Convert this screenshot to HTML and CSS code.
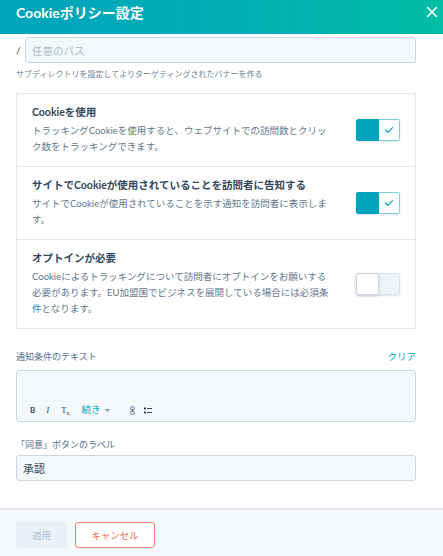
FILE: index.html
```html
<!DOCTYPE html>
<html lang="ja">
<head>
<meta charset="utf-8">
<title>Cookieポリシー設定</title>
<link rel="stylesheet" href="styles.css">
</head>
<body>
<div class="modal">
  <header class="hdr">
    <h1 class="title">Cookieポリシー設定</h1>
    <button class="close" aria-label="閉じる">
      <svg width="12" height="12" viewBox="0 0 12 12"><path d="M1.5 1.5L10.5 10.5M10.5 1.5L1.5 10.5" stroke="#fff" stroke-width="1.6" stroke-linecap="round"/></svg>
    </button>
  </header>
  <main class="main">
    <div class="path-row">
      <span class="slash">/</span>
      <div class="input path-input"><span class="placeholder">任意のパス</span></div>
    </div>
    <p class="help">サブディレクトリを設定してよりターゲティングされたバナーを作る</p>

    <div class="card">
      <div class="opt">
        <div class="opt-text">
          <div class="opt-title">Cookieを使用</div>
          <div class="opt-desc">トラッキングCookieを使用すると、ウェブサイトでの訪問数とクリック数をトラッキングできます。</div>
        </div>
        <span class="toggle on"><span class="half knob"></span><span class="half track"><svg width="10" height="8" viewBox="0 0 10 8"><path d="M1.5 4.2L3.9 6.4L8.5 1.6" fill="none" stroke="#00a4bd" stroke-width="1.2" stroke-linecap="round" stroke-linejoin="round"/></svg></span></span>
      </div>
      <div class="opt">
        <div class="opt-text">
          <div class="opt-title">サイトでCookieが使用されていることを訪問者に告知する</div>
          <div class="opt-desc">サイトでCookieが使用されていることを示す通知を訪問者に表示します。</div>
        </div>
        <span class="toggle on"><span class="half knob"></span><span class="half track"><svg width="10" height="8" viewBox="0 0 10 8"><path d="M1.5 4.2L3.9 6.4L8.5 1.6" fill="none" stroke="#00a4bd" stroke-width="1.2" stroke-linecap="round" stroke-linejoin="round"/></svg></span></span>
      </div>
      <div class="opt">
        <div class="opt-text">
          <div class="opt-title">オプトインが必要</div>
          <div class="opt-desc">Cookieによるトラッキングについて訪問者にオプトインをお願いする必要があります。EU加盟国でビジネスを展開している場合には必須条件となります。</div>
        </div>
        <span class="toggle off"><span class="half knob"></span><span class="half track"></span></span>
      </div>
    </div>

    <div class="label-row">
      <span class="label">通知条件のテキスト</span>
      <a class="link">クリア</a>
    </div>
    <div class="editor">
      <div class="toolbar">
        <span class="tb tb-b">B</span>
        <span class="tb tb-i">I</span>
        <span class="tb tb-tx">T<span class="sub">x</span></span>
        <span class="tb tb-more">続き</span>
        <span class="tb tb-caret"><svg width="5" height="3" viewBox="0 0 5 3"><path d="M0 0H5L2.5 3Z" fill="#7c98b6"/></svg></span>
        <span class="tb tb-link"><svg width="5" height="9" viewBox="0 0 5 9"><rect x="0.6" y="0.6" width="3.8" height="3.4" rx="1.7" fill="none" stroke="#516f90" stroke-width="0.9"/><rect x="0.6" y="5" width="3.8" height="3.4" rx="1.7" fill="none" stroke="#516f90" stroke-width="0.9"/><path d="M2.5 3V6" stroke="#516f90" stroke-width="0.9"/></svg></span>
        <span class="tb tb-list"><svg width="8" height="7" viewBox="0 0 8 7"><rect x="0" y="0.5" width="2" height="2" fill="#33475b"/><rect x="0" y="4.5" width="2" height="2" fill="#33475b"/><path d="M3 1.5H8M3 5.5H8" stroke="#33475b" stroke-width="1.1"/></svg></span>
      </div>
    </div>

    <div class="label label-accept">「同意」ボタンのラベル</div>
    <div class="input value-input">承認</div>
  </main>
  <footer class="ftr">
    <button class="btn btn-apply" disabled>適用</button>
    <button class="btn btn-cancel">キャンセル</button>
  </footer>
</div>
</body>
</html>
```
FILE: styles.css
```css
html, body {
  margin: 0;
  padding: 0;
}
body {
  font-family: Lato, "Noto Sans CJK JP", sans-serif;
  color: #33475b;
  background: #fff;
}
.modal {
  width: 443px;
  height: 556px;
  display: flex;
  flex-direction: column;
  overflow: hidden;
}
.hdr {
  flex: none;
  height: 34px;
  box-sizing: border-box;
  padding: 4px 5px 0 16px;
  display: flex;
  justify-content: space-between;
  align-items: flex-start;
  background: linear-gradient(to right, #00a4bd, #00afb2 56%, #00bda5);
}
.title {
  margin: 0;
  font-size: 14px;
  line-height: 18px;
  font-weight: 700;
  color: #fff;
}
.close {
  border: 0;
  background: none;
  padding: 0;
  margin-top: 2px;
  width: 12px;
  height: 12px;
  display: flex;
}
.main {
  flex: 1;
  padding: 3px 27px 0 16px;
}
.path-row {
  display: flex;
  align-items: center;
}
.slash {
  width: 9px;
  font-size: 10px;
  color: #33475b;
  line-height: 26px;
}
.input {
  height: 26px;
  box-sizing: border-box;
  border: 1px solid #cbd6e2;
  background: #f5f8fa;
  border-radius: 3px;
  padding: 0 6px;
  display: flex;
  align-items: center;
  font-size: 11px;
}
.path-input {
  flex: 1;
}
.placeholder {
  font-size: 10.5px;
  color: #a9b9ca;
}
.help {
  margin: 5px 0 0;
  font-size: 8px;
  line-height: 12px;
  color: #6a7f94;
}
.card {
  margin-top: 13px;
  border: 1px solid #e3e8ee;
}
.opt {
  display: flex;
  align-items: center;
  justify-content: space-between;
  padding: 10px 15px 11px 15px;
}
.opt + .opt {
  border-top: 1px solid #e3e8ee;
}
.opt-title {
  font-size: 10.5px;
  font-weight: 700;
  line-height: 16px;
  color: #33475b;
  margin-bottom: 3px;
}
.opt-desc {
  width: 300px;
  font-size: 9.5px;
  line-height: 16px;
  color: #62778c;
}
.toggle {
  flex: none;
  display: flex;
  width: 44px;
  height: 22px;
  border-radius: 2px;
  box-shadow: 0 1px 2px rgba(45, 62, 80, 0.15);
}
.half {
  flex: 1;
  box-sizing: border-box;
}
.on .knob {
  background: #00a4bd;
  border: 1px solid #00a4bd;
  border-radius: 2px 0 0 2px;
}
.on .track {
  background: #fff;
  border: 1px solid #7fd1de;
  border-left: 0;
  border-radius: 0 2px 2px 0;
  display: flex;
  align-items: center;
  justify-content: center;
}
.off .knob {
  background: #fff;
  border: 1px solid #cbd6e2;
  border-radius: 2px;
  box-shadow: 0 1px 3px rgba(45, 62, 80, 0.18);
  position: relative;
  z-index: 1;
}
.off .track {
  background: #eef3f8;
  border: 1px solid #dbe3ec;
  border-left: 0;
  border-radius: 0 2px 2px 0;
}
.label-row {
  margin-top: 21px;
  display: flex;
  justify-content: space-between;
  align-items: center;
}
.label {
  font-size: 9px;
  line-height: 14px;
  color: #516f90;
}
.link {
  font-size: 9.5px;
  line-height: 14px;
  color: #00a4bd;
}
.editor {
  margin-top: 6px;
  height: 52px;
  box-sizing: border-box;
  border: 1px solid #cbd6e2;
  background: #f5f8fa;
  border-radius: 3px;
  display: flex;
  align-items: flex-end;
}
.toolbar {
  display: flex;
  align-items: center;
  height: 16px;
  padding: 0 0 3px 13px;
}
.tb {
  display: flex;
  align-items: center;
  line-height: 16px;
  color: #33475b;
}
.tb-b {
  font-size: 8px;
  font-weight: 700;
}
.tb-i {
  margin-left: 11px;
  font-family: "Liberation Serif", serif;
  font-style: italic;
  font-size: 9px;
}
.tb-tx {
  margin-left: 12px;
  font-family: "Liberation Serif", serif;
  font-size: 8.5px;
}
.sub {
  font-size: 6px;
  margin-top: 5px;
}
.tb-more {
  margin-left: 12px;
  font-size: 9.5px;
  color: #00a4bd;
}
.tb-caret {
  margin-left: 4px;
}
.tb-link {
  margin-left: 20px;
}
.tb-list {
  margin-left: 9px;
}
.label-accept {
  margin-top: 16px;
}
.value-input {
  margin-top: 3px;
  color: #33475b;
}
.ftr {
  flex: none;
  height: 48px;
  box-sizing: border-box;
  border-top: 2px solid #e3e8ee;
  background: #f5f8fa;
  padding: 12px 16px 0;
  display: flex;
  align-items: flex-start;
  gap: 8px;
}
.btn {
  height: 26px;
  box-sizing: border-box;
  border-radius: 3px;
  font-family: inherit;
  font-size: 9.5px;
  padding: 0;
}
.btn-apply {
  width: 51px;
  background: #eaf0f6;
  border: 1px solid #eaf0f6;
  color: #b0c1d4;
}
.btn-cancel {
  width: 80px;
  background: #fff;
  border: 1px solid #f0846a;
  color: #ea6c4f;
}
```
